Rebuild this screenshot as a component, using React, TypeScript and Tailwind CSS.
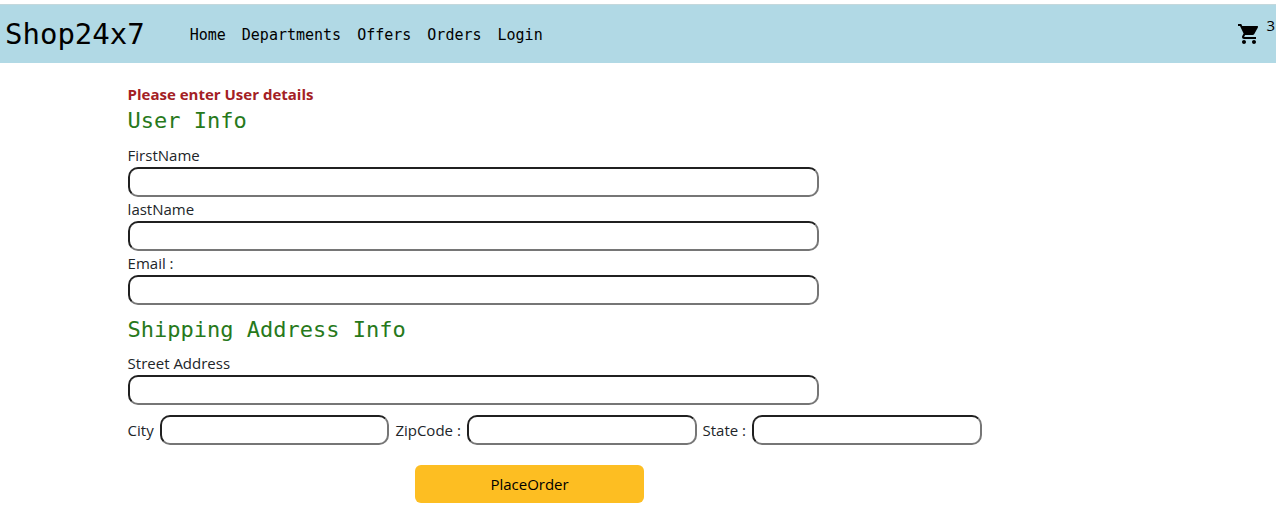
import { MdShoppingCart } from "react-icons/md";

const links = ["Home", "Departments", "Offers", "Orders", "Login"];

const inputStyle =
  "h-[30px] rounded-[10px] border-2 border-t-[#202020] border-l-[#202020] border-r-[#767676] border-b-[#767676] bg-white px-2";

function Field({ id, label }: { id: string; label: string }) {
  return (
    <div className="flex flex-col">
      <label htmlFor={id} className="leading-6">
        {label}
      </label>
      <input id={id} type="text" className={`${inputStyle} w-[60.2%]`} />
    </div>
  );
}

function InlineField({ id, label }: { id: string; label: string }) {
  return (
    <>
      <label htmlFor={id} className="whitespace-nowrap">
        {label}
      </label>
      <input id={id} type="text" className={`${inputStyle} w-1/5 min-w-0`} />
    </>
  );
}

function Heading({ children }: { children: string }) {
  return (
    <h2 className="font-['DejaVu_Sans_Mono',monospace] text-[22px] leading-7 text-[#27791b]">
      {children}
    </h2>
  );
}

export default function App() {
  return (
    <div className="bg-white pt-1 font-['Open_Sans',sans-serif] text-[15px] text-[#212529]">
      <header className="flex h-[59px] items-center border-t border-[#c4d8dc] bg-[#b1d9e5] text-black">
        <a href="#" className="ml-[5px] pt-0.5 font-['DejaVu_Sans_Mono',monospace] text-[29px]">
          Shop24x7
        </a>
        <nav className="ml-[45px] flex gap-4 pt-0.5 font-['DejaVu_Sans_Mono',monospace] text-[15px]">
          {links.map((link) => (
            <a key={link} href="#">
              {link}
            </a>
          ))}
        </nav>
        <a href="#" aria-label="Cart" className="ml-auto flex items-start gap-[5px] pr-px pb-2">
          <MdShoppingCart className="mt-2 size-6" />
          <span className="mt-px leading-5">3</span>
        </a>
      </header>

      <form className="ml-[10%] pt-[19px]">
        <p className="font-bold leading-6 text-[#a32024]">Please enter User details</p>
        <div className="mt-px">
          <Heading>User Info</Heading>
        </div>
        <div className="mt-2">
          <Field id="firstName" label="FirstName" />
          <Field id="lastName" label="lastName" />
          <Field id="email" label="Email :" />
        </div>
        <div className="mt-[11px]">
          <Heading>Shipping Address Info</Heading>
        </div>
        <div className="mt-[7px]">
          <Field id="street" label="Street Address" />
        </div>
        <div className="mt-[10px] flex items-center gap-1.5">
          <InlineField id="city" label="City" />
          <InlineField id="zip" label="ZipCode :" />
          <InlineField id="state" label="State :" />
        </div>
        <button
          type="button"
          className="mt-5 mb-6 ml-[25%] h-[38px] w-1/5 rounded-md bg-[#fdbe22] text-black"
        >
          PlaceOrder
        </button>
      </form>
    </div>
  );
}
